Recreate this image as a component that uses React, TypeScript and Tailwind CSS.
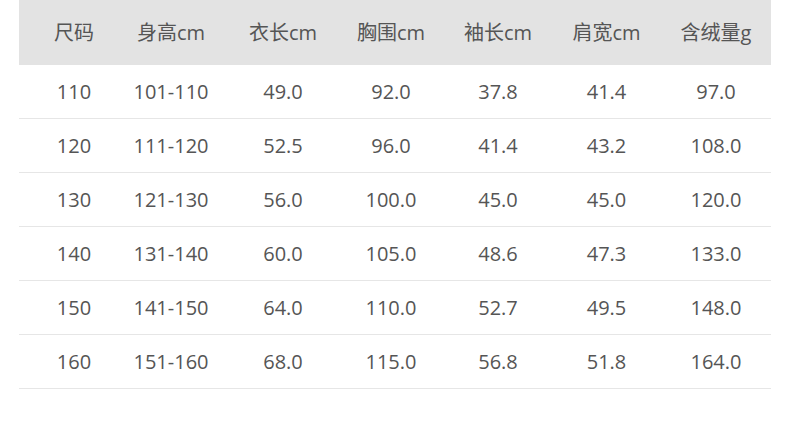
const headers = ["尺码", "身高cm", "衣长cm", "胸围cm", "袖长cm", "肩宽cm", "含绒量g"];

const rows = [
  ["110", "101-110", "49.0", "92.0", "37.8", "41.4", "97.0"],
  ["120", "111-120", "52.5", "96.0", "41.4", "43.2", "108.0"],
  ["130", "121-130", "56.0", "100.0", "45.0", "45.0", "120.0"],
  ["140", "131-140", "60.0", "105.0", "48.6", "47.3", "133.0"],
  ["150", "141-150", "64.0", "110.0", "52.7", "49.5", "148.0"],
  ["160", "151-160", "68.0", "115.0", "56.8", "51.8", "164.0"],
];

// nudge per column so the text centres line up with the picture
const cellPad = ["pl-[7px]", "pr-[8px]", "", "", "", "", ""];

export default function App() {
  return (
    <div
      className="h-[431px] w-[790px] bg-white text-[20px] text-[#555555]"
      style={{ fontFamily: '"Open Sans", "Noto Sans CJK SC", sans-serif' }}
    >
      <div className="ml-[19px] w-[752px]">
        <div className="grid h-[65px] grid-cols-[103px_106px_110px_106px_108px_109px_110px] items-center bg-[#e3e3e3]">
          {headers.map((h, i) => (
            <div key={h} className={`text-center ${cellPad[i]}`}>
              {h}
            </div>
          ))}
        </div>
        {rows.map((r) => (
          <div
            key={r[0]}
            className="grid h-[54px] grid-cols-[103px_106px_110px_106px_108px_109px_110px] items-center border-b border-[#e6e6e6]"
          >
            {r.map((c, i) => (
              <div key={i} className={`text-center ${cellPad[i]}`}>
                {c}
              </div>
            ))}
          </div>
        ))}
      </div>
    </div>
  );
}
